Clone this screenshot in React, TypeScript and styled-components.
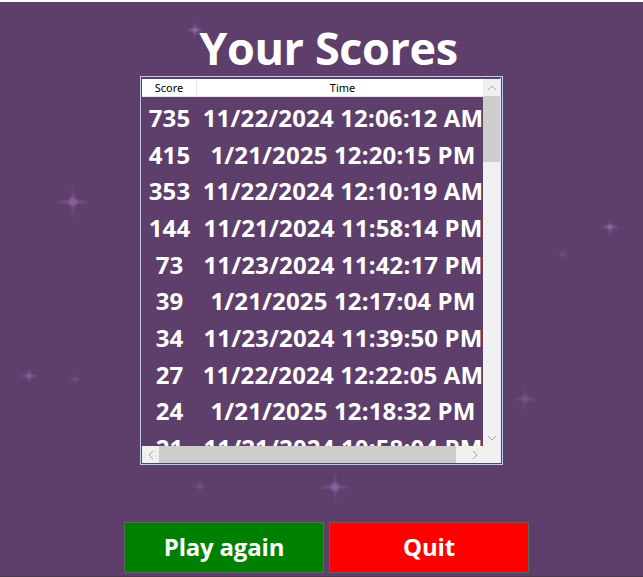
import { FC } from 'react';
import styled, { createGlobalStyle } from 'styled-components';

interface IScore {
  score: number;
  time: string;
}

const scores: IScore[] = [
  { score: 735, time: '11/22/2024 12:06:12 AM' },
  { score: 415, time: '1/21/2025 12:20:15 PM' },
  { score: 353, time: '11/22/2024 12:10:19 AM' },
  { score: 144, time: '11/21/2024 11:58:14 PM' },
  { score: 73, time: '11/23/2024 11:42:17 PM' },
  { score: 39, time: '1/21/2025 12:17:04 PM' },
  { score: 34, time: '11/23/2024 11:39:50 PM' },
  { score: 27, time: '11/22/2024 12:22:05 AM' },
  { score: 24, time: '1/21/2025 12:18:32 PM' },
  { score: 21, time: '11/21/2024 10:58:04 PM' },
];

// x, y, arm length, opacity
const sparkles: [number, number, number, number][] = [
  [195, 30, 16, 0.85],
  [73, 202, 36, 0.6],
  [610, 227, 18, 0.75],
  [563, 254, 9, 0.35],
  [525, 399, 26, 0.35],
  [29, 376, 18, 0.6],
  [75, 379, 11, 0.35],
  [200, 486, 16, 0.35],
  [335, 487, 32, 0.6],
];

const Sparkles: FC = () => (
  <SparkleLayer width='643' height='577'>
    <defs>
      <filter id='soft' x='-50%' y='-50%' width='200%' height='200%'>
        <feGaussianBlur stdDeviation='0.9' />
      </filter>
    </defs>
    {sparkles.map(([x, y, s, o], i) => (
      <g key={i} opacity={o} filter='url(#soft)' fill='#a672bf'>
        <path d={`M${x - s / 2} ${y} Q${x} ${y - 1.8} ${x + s / 2} ${y} Q${x} ${y + 1.8} ${x - s / 2} ${y}Z`} />
        <path d={`M${x} ${y - s / 2} Q${x - 1.8} ${y} ${x} ${y + s / 2} Q${x + 1.8} ${y} ${x} ${y - s / 2}Z`} />
        <circle cx={x} cy={y} r={s / 10 + 0.8} />
      </g>
    ))}
  </SparkleLayer>
);

const Chevron: FC<{ dir: 'up' | 'down' | 'left' | 'right' }> = ({ dir }) => {
  const d = {
    up: 'M1 6 L5 2 L9 6',
    down: 'M1 2 L5 6 L9 2',
    left: 'M6 1 L2 5 L6 9',
    right: 'M2 1 L6 5 L2 9',
  }[dir];
  const vertical = dir === 'up' || dir === 'down';
  return (
    <svg width={vertical ? 10 : 8} height={vertical ? 8 : 10} viewBox={vertical ? '0 0 10 8' : '0 0 8 10'}>
      <path d={d} fill='none' stroke='#a3a3a3' strokeWidth='1' />
    </svg>
  );
};

const App: FC = () => {
  return (
    <>
      <GlobalStyle />
      <Page>
        <Sparkles />
        <Title>Your Scores</Title>
        <Frame>
          <ListView>
            <Viewport>
              <Header>
                <HeaderCell $width={55}>Score</HeaderCell>
                <HeaderCell $width={292}>Time</HeaderCell>
              </Header>
              <Rows>
                {scores.map((s) => (
                  <Row key={s.time}>
                    <Cell $width={55}>{s.score}</Cell>
                    <Cell $width={292}>{s.time}</Cell>
                  </Row>
                ))}
              </Rows>
            </Viewport>
            <VScroll>
              <ArrowBox>
                <Chevron dir='up' />
              </ArrowBox>
              <VTrack>
                <VThumb />
              </VTrack>
              <ArrowBox>
                <Chevron dir='down' />
              </ArrowBox>
            </VScroll>
            <HScroll>
              <ArrowBox>
                <Chevron dir='left' />
              </ArrowBox>
              <HTrack>
                <HThumb />
              </HTrack>
              <ArrowBox>
                <Chevron dir='right' />
              </ArrowBox>
            </HScroll>
            <Corner />
          </ListView>
        </Frame>
        <ButtonRow>
          <ActionButton $bg='#008000'>Play again</ActionButton>
          <ActionButton $bg='#ff0000'>Quit</ActionButton>
        </ButtonRow>
      </Page>
    </>
  );
};

export default App;

const GlobalStyle = createGlobalStyle`
  html, body {
    margin: 0;
    padding: 0;
    background: #5e3f6b;
  }
  * {
    box-sizing: border-box;
  }
`;

const Page = styled.div`
  position: relative;
  width: 643px;
  height: 577px;
  overflow: hidden;
  background: #5e3f6b;
  border-top: 2px solid #ffffff;
  border-bottom: 1px solid #4a3a50;
  display: flex;
  flex-direction: column;
  align-items: center;
  font-family: 'Open Sans', 'Noto Sans', sans-serif;
  color: #ffffff;
`;

const SparkleLayer = styled.svg`
  position: absolute;
  left: 0;
  top: -2px;
  pointer-events: none;
`;

const Title = styled.h1`
  position: relative;
  margin: 18px 0 0 14px;
  height: 56px;
  font-size: 45px;
  line-height: 56px;
  font-weight: 700;
  letter-spacing: -0.4px;
`;

const Frame = styled.div`
  position: relative;
  width: 363px;
  height: 389px;
  border: 1px solid #b9cbe8;
  padding: 1px 0 0 1px;
  background: #5e3f6b;
`;

const ListView = styled.div`
  display: grid;
  grid-template-columns: 341px 17px;
  grid-template-rows: 367px 17px;
  width: 359px;
  height: 385px;
  border-right: 1px solid #e6ecf6;
  border-bottom: 1px solid #e6ecf6;
  padding-top: 1px;
`;

const Viewport = styled.div`
  overflow: hidden;
  display: flex;
  flex-direction: column;
`;

const Header = styled.div`
  display: flex;
  flex-shrink: 0;
  height: 18px;
  background: #ffffff;
  border-bottom: 1px solid #e5e5e5;
`;

const HeaderCell = styled.div<{ $width: number }>`
  flex-shrink: 0;
  width: ${({ $width }) => $width}px;
  border-right: 1px solid #e5e5e5;
  font-size: 11px;
  line-height: 17px;
  text-align: center;
  color: #000000;
  font-family: 'Noto Sans', 'Open Sans', sans-serif;
`;

const Rows = styled.div`
  padding-top: 2px;
`;

const Row = styled.div`
  display: flex;
  height: 36.7px;
  align-items: center;
`;

const Cell = styled.div<{ $width: number }>`
  flex-shrink: 0;
  width: ${({ $width }) => $width}px;
  text-align: center;
  white-space: nowrap;
  font-size: 24px;
  font-weight: 700;
  letter-spacing: 0.15px;
`;

const VScroll = styled.div`
  display: flex;
  flex-direction: column;
  background: #f0f0f0;
`;

const HScroll = styled.div`
  display: flex;
  background: #f0f0f0;
`;

const ArrowBox = styled.div`
  flex-shrink: 0;
  width: 17px;
  height: 17px;
  display: flex;
  align-items: center;
  justify-content: center;
`;

const VTrack = styled.div`
  flex: 1;
`;

const VThumb = styled.div`
  height: 66px;
  background: #cdcdcd;
`;

const HTrack = styled.div`
  flex: 1;
`;

const HThumb = styled.div`
  width: 297px;
  height: 100%;
  background: #cdcdcd;
`;

const Corner = styled.div`
  background: #f0f0f0;
`;

const ButtonRow = styled.div`
  position: relative;
  display: flex;
  gap: 5px;
  margin: 57px 0 0 10px;
`;

const ActionButton = styled.button<{ $bg: string }>`
  width: 200px;
  height: 51px;
  background: ${({ $bg }) => $bg};
  border: 1px solid #5a6a5a;
  color: #ffffff;
  font-family: 'Open Sans', 'Noto Sans', sans-serif;
  font-size: 24px;
  font-weight: 700;
  letter-spacing: -0.2px;
  cursor: pointer;
  padding: 0 0 2px;
`;
